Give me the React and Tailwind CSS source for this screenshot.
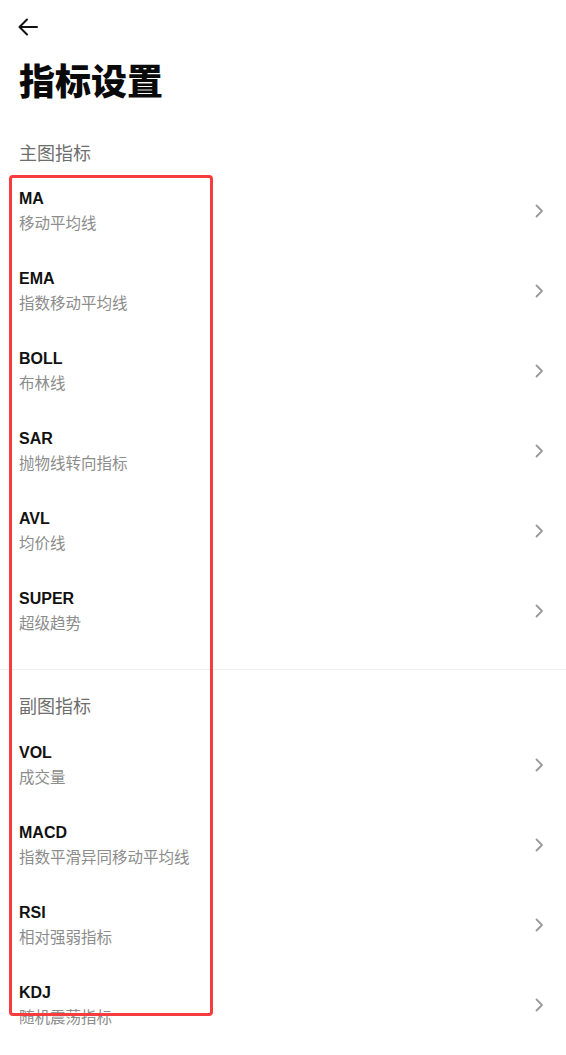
import React from "react";

const font = { fontFamily: '"Liberation Sans", "Noto Sans CJK SC", sans-serif' };

const main = [
  ["MA", "移动平均线"],
  ["EMA", "指数移动平均线"],
  ["BOLL", "布林线"],
  ["SAR", "抛物线转向指标"],
  ["AVL", "均价线"],
  ["SUPER", "超级趋势"],
];
const sub = [
  ["VOL", "成交量"],
  ["MACD", "指数平滑异同移动平均线"],
  ["RSI", "相对强弱指标"],
  ["KDJ", "随机震荡指标"],
];

function Chevron() {
  return (
    <svg width="10" height="16" viewBox="0 0 10 16" fill="none">
      <path d="M2.5 2.5l5.5 5.5-5.5 5.5" stroke="#9a9a9a" strokeWidth="1.8" strokeLinecap="round" strokeLinejoin="round" />
    </svg>
  );
}

function Row({ t, s }) {
  return (
    <div className="h-[80px] flex items-center justify-between pl-[19px] pr-[22px]">
      <div className="flex flex-col">
        <div className="text-[16px] leading-[20px] font-bold text-[#111]">{t}</div>
        <div className="mt-[5px] text-[15.5px] leading-[20px] text-[#8c8c8c]">{s}</div>
      </div>
      <Chevron />
    </div>
  );
}

export default function App() {
  return (
    <div className="relative w-[566px] h-[1055px] bg-white overflow-hidden" style={font}>
      <div className="h-[54px] flex items-center pl-[17px]">
        <svg width="22" height="22" viewBox="0 0 22 22" fill="none">
          <path d="M20 11H3M10 3.5L2.5 11l7.5 7.5" stroke="#111" strokeWidth="2" strokeLinecap="round" strokeLinejoin="round" />
        </svg>
      </div>
      <div className="mt-[7px] h-[44px] leading-[44px] text-[36px] font-black text-[#0a0a0a] pl-[19px]">指标设置</div>
      <div className="mt-[37px] h-[24px] leading-[24px] text-[18px] text-[#6e6e6e] pl-[19px]">主图指标</div>
      <div className="mt-[5px]">
        {main.map(([t, s]) => (
          <Row key={t} t={t} s={s} />
        ))}
      </div>
      <div className="mt-[18px] h-px bg-[#f0f0f0]" />
      <div className="mt-[25px] h-[24px] leading-[24px] text-[18px] text-[#6e6e6e] pl-[19px]">副图指标</div>
      <div className="mt-[6px]">
        {sub.map(([t, s]) => (
          <Row key={t} t={t} s={s} />
        ))}
      </div>
      <div className="absolute left-[9px] top-[175px] w-[204px] h-[841px] border-[3px] border-[#f63c3c] rounded-[4px] pointer-events-none" />
    </div>
  );
}
